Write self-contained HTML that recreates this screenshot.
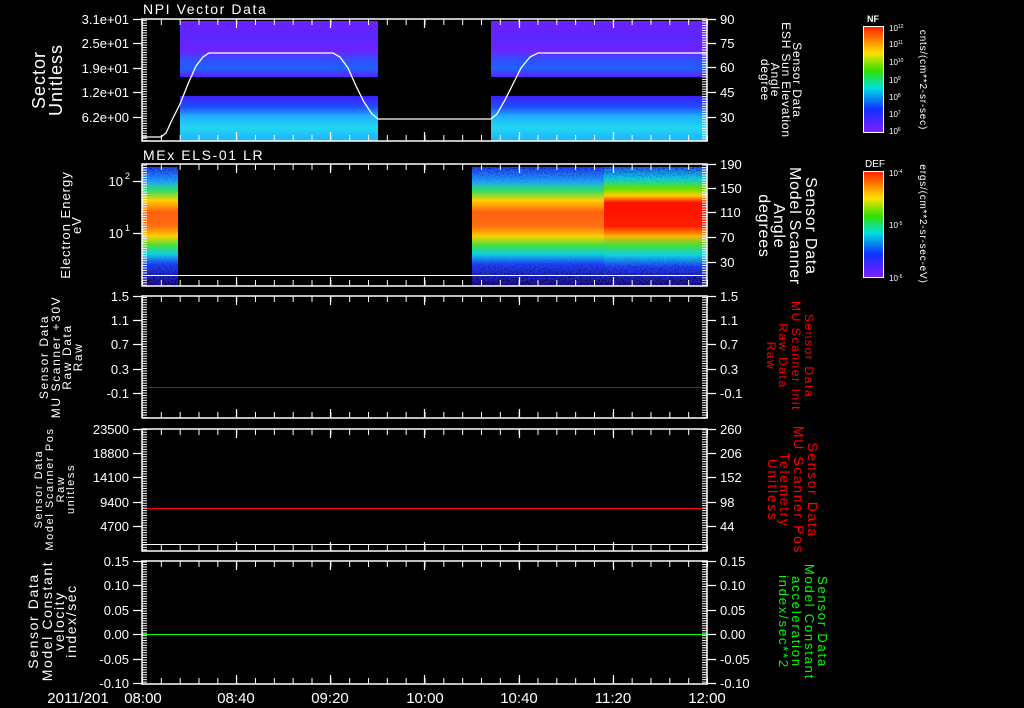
<!DOCTYPE html>
<html><head><meta charset="utf-8"><style>
html,body{margin:0;padding:0;background:#000;width:1024px;height:708px;overflow:hidden}
svg{display:block;font-family:"Liberation Sans",sans-serif}
</style></head><body>
<svg width="1024" height="708" viewBox="0 0 1024 708" xmlns="http://www.w3.org/2000/svg">
<defs>
<pattern id="tx" patternUnits="userSpaceOnUse" x="142" y="0" width="18.833" height="708"><rect x="0" y="0" width="1" height="708" fill="#fff"/></pattern>
<pattern id="ty" patternUnits="userSpaceOnUse" x="0" y="0.5" width="1024" height="2.45"><rect x="0" y="0" width="1024" height="1" fill="#fff"/></pattern>
<linearGradient id="cb" x1="0" y1="0" x2="0" y2="1">
<stop offset="0" stop-color="#ff2000"/><stop offset="0.25" stop-color="#ffe000"/><stop offset="0.42" stop-color="#30e000"/><stop offset="0.58" stop-color="#00e0e0"/><stop offset="0.78" stop-color="#1030ff"/><stop offset="1" stop-color="#8020ff"/></linearGradient>
<linearGradient id="p1lo" x1="0" y1="0" x2="0" y2="1">
<stop offset="0" stop-color="#3a20ff"/><stop offset="0.25" stop-color="#2050ff"/><stop offset="0.45" stop-color="#20b0ff"/><stop offset="0.7" stop-color="#20d8f0"/><stop offset="1" stop-color="#20b0ff"/></linearGradient>
<linearGradient id="p1hi" x1="0" y1="0" x2="0" y2="1">
<stop offset="0" stop-color="#6a20ff"/><stop offset="0.3" stop-color="#5a28ff"/><stop offset="0.5" stop-color="#7020ff"/><stop offset="0.7" stop-color="#3050ff"/><stop offset="0.85" stop-color="#2060ff"/><stop offset="1" stop-color="#5a20ff"/></linearGradient>
<linearGradient id="p2" x1="0" y1="0" x2="0" y2="1">
<stop offset="0" stop-color="#2040ff"/><stop offset="0.12" stop-color="#20a0ff"/><stop offset="0.2" stop-color="#30e060"/><stop offset="0.28" stop-color="#ffd000"/><stop offset="0.38" stop-color="#ff6010"/><stop offset="0.5" stop-color="#ff7010"/><stop offset="0.58" stop-color="#ffd000"/><stop offset="0.66" stop-color="#40e040"/><stop offset="0.73" stop-color="#10d0e0"/><stop offset="0.82" stop-color="#2040ff"/><stop offset="1" stop-color="#2010a0"/></linearGradient>
<linearGradient id="p2r" x1="0" y1="0" x2="0" y2="1">
<stop offset="0" stop-color="#2060ff"/><stop offset="0.1" stop-color="#10d0e0"/><stop offset="0.18" stop-color="#60e000"/><stop offset="0.24" stop-color="#ffd000"/><stop offset="0.3" stop-color="#ff1000"/><stop offset="0.5" stop-color="#ff2000"/><stop offset="0.58" stop-color="#ffb000"/><stop offset="0.66" stop-color="#40e040"/><stop offset="0.74" stop-color="#10d0e0"/><stop offset="0.84" stop-color="#2040ff"/><stop offset="1" stop-color="#2010a0"/></linearGradient>
<filter id="spk" x="0" y="0" width="1" height="1"><feTurbulence type="fractalNoise" baseFrequency="0.6" numOctaves="1" seed="3"/><feColorMatrix type="matrix" values="0 0 0 0 0  0 0 0 0 0  0 0 0 0 0  0 0 0 -3 1.7"/></filter>
<linearGradient id="fade" x1="0" y1="0" x2="0" y2="1"><stop offset="0" stop-color="#fff" stop-opacity="0.5"/><stop offset="0.15" stop-color="#fff" stop-opacity="0"/><stop offset="0.75" stop-color="#fff" stop-opacity="0"/><stop offset="1" stop-color="#fff" stop-opacity="1"/></linearGradient>
<mask id="m2"><rect x="0" y="167" width="1024" height="120" fill="url(#fade)"/></mask>
</defs>

<rect x="180" y="21" width="198" height="56" fill="url(#p1hi)"/>
<rect x="180" y="96" width="198" height="45" fill="url(#p1lo)"/>
<rect x="491" y="21" width="216" height="56" fill="url(#p1hi)"/>
<rect x="491" y="96" width="216" height="45" fill="url(#p1lo)"/>
<polyline fill="none" stroke="#fff" stroke-width="1.3" points="142,137 161,137 166,133 172,120 180,104 188,84 196,66 203,57 209,53 333,53 340,57 348,68 356,86 364,102 372,114 378,119 491,119 497,114 505,100 513,84 521,68 530,57 538,53 707,53"/>

<rect x="142" y="167" width="36" height="119" fill="url(#p2)"/>
<rect x="472" y="167" width="132" height="119" fill="url(#p2)"/>
<rect x="604" y="167" width="103" height="119" fill="url(#p2r)"/>
<g mask="url(#m2)"><rect x="142" y="167" width="36" height="119" filter="url(#spk)"/><rect x="472" y="167" width="235" height="119" filter="url(#spk)"/></g>
<line x1="142" y1="275.5" x2="707" y2="275.5" stroke="#fff"/>

<line x1="142" y1="387.5" x2="707" y2="387.5" stroke="#c00000"/>
<line x1="142" y1="508.5" x2="707" y2="508.5" stroke="#ff0000"/>
<line x1="142" y1="544.5" x2="707" y2="544.5" stroke="#fff"/>
<line x1="142" y1="634.5" x2="707" y2="634.5" stroke="#00ff00"/>

<g fill="none" stroke="#fff" stroke-width="1.5">
<rect x="142" y="19" width="565" height="122"/>
<rect x="142" y="164" width="565" height="122"/>
<rect x="142" y="296" width="565" height="122"/>
<rect x="142" y="429" width="565" height="122"/>
<rect x="142" y="561" width="565" height="123"/>
</g>
<g fill="url(#tx)">
<rect x="142" y="19" width="566" height="6"/><rect x="142" y="135" width="566" height="6"/>
<rect x="142" y="164" width="566" height="6"/><rect x="142" y="280" width="566" height="6"/>
<rect x="142" y="296" width="566" height="6"/><rect x="142" y="412" width="566" height="6"/>
<rect x="142" y="429" width="566" height="6"/><rect x="142" y="545" width="566" height="6"/>
<rect x="142" y="561" width="566" height="6"/><rect x="142" y="678" width="566" height="6"/>
</g>
<g fill="url(#ty)">
<rect x="142" y="19" width="5" height="122"/><rect x="702" y="19" width="5" height="122"/>
<rect x="142" y="164" width="5" height="122"/><rect x="702" y="164" width="5" height="122"/>
<rect x="142" y="296" width="5" height="122"/><rect x="702" y="296" width="5" height="122"/>
<rect x="142" y="429" width="5" height="122"/><rect x="702" y="429" width="5" height="122"/>
<rect x="142" y="561" width="5" height="123"/><rect x="702" y="561" width="5" height="123"/>
</g>
<g stroke="#fff" stroke-width="1.2">
<path d="M133 19.5H142M133 43.5H142M133 68.5H142M133 92.5H142M133 117.5H142M707 19.5H716M707 43.5H716M707 67.5H716M707 92.5H716M707 117.5H716"/>
<path d="M133 181.5H142M133 233.5H142M707 164.5H716M707 188.5H716M707 212.5H716M707 237.5H716M707 262.5H716"/>
<path d="M133 296.5H142M133 320.5H142M133 344.5H142M133 369.5H142M133 393.5H142M707 296.5H716M707 320.5H716M707 344.5H716M707 369.5H716M707 393.5H716"/>
<path d="M133 429.5H142M133 453.5H142M133 477.5H142M133 502.5H142M133 526.5H142M707 429.5H716M707 453.5H716M707 477.5H716M707 502.5H716M707 526.5H716"/>
<path d="M133 561.5H142M133 585.5H142M133 610.5H142M133 634.5H142M133 659.5H142M133 683.5H142M707 561.5H716M707 585.5H716M707 610.5H716M707 634.5H716M707 659.5H716M707 683.5H716"/>
<path d="M236.5 19V28M330.5 19V28M424.5 19V28M519.5 19V28M613.5 19V28M236.5 164V173M330.5 164V173M424.5 164V173M519.5 164V173M613.5 164V173M236.5 296V305M330.5 296V305M424.5 296V305M519.5 296V305M613.5 296V305M236.5 429V438M330.5 429V438M424.5 429V438M519.5 429V438M613.5 429V438M236.5 561V570M330.5 561V570M424.5 561V570M519.5 561V570M613.5 561V570"/>
<path d="M236.5 132V141M330.5 132V141M424.5 132V141M519.5 132V141M613.5 132V141M236.5 277V286M330.5 277V286M424.5 277V286M519.5 277V286M613.5 277V286M236.5 409V418M330.5 409V418M424.5 409V418M519.5 409V418M613.5 409V418M236.5 542V551M330.5 542V551M424.5 542V551M519.5 542V551M613.5 542V551M236.5 675V684M330.5 675V684M424.5 675V684M519.5 675V684M613.5 675V684"/>
</g>

<g fill="#fff" font-size="14" letter-spacing="1.6">
<text x="143" y="14">NPI Vector Data</text>
<text x="143" y="160">MEx ELS-01 LR</text>
</g>

<g fill="#fff" font-size="13" text-anchor="end">
<text x="129" y="24">3.1e+01</text><text x="129" y="48">2.5e+01</text><text x="129" y="73">1.9e+01</text><text x="129" y="97">1.2e+01</text><text x="129" y="122">6.2e+00</text>
<text x="123" y="186">10</text><text x="130" y="179" font-size="9">2</text>
<text x="123" y="238">10</text><text x="130" y="231" font-size="9">1</text>
<text x="129" y="301">1.5</text><text x="129" y="325">1.1</text><text x="129" y="349">0.7</text><text x="129" y="374">0.3</text><text x="129" y="398">-0.1</text>
<text x="129" y="434">23500</text><text x="129" y="458">18800</text><text x="129" y="482">14100</text><text x="129" y="507">9400</text><text x="129" y="531">4700</text>
<text x="129" y="566">0.15</text><text x="129" y="590">0.10</text><text x="129" y="615">0.05</text><text x="129" y="639">0.00</text><text x="129" y="664">-0.05</text><text x="129" y="688">-0.10</text>
</g>
<g fill="#fff" font-size="13">
<text x="720" y="24">90</text><text x="720" y="48">75</text><text x="720" y="72">60</text><text x="720" y="97">45</text><text x="720" y="122">30</text>
<text x="720" y="169">190</text><text x="720" y="193">150</text><text x="720" y="217">110</text><text x="720" y="242">70</text><text x="720" y="267">30</text>
<text x="720" y="301">1.5</text><text x="720" y="325">1.1</text><text x="720" y="349">0.7</text><text x="720" y="374">0.3</text><text x="720" y="398">-0.1</text>
<text x="720" y="434">260</text><text x="720" y="458">206</text><text x="720" y="482">152</text><text x="720" y="507">98</text><text x="720" y="531">44</text>
<text x="720" y="566">0.15</text><text x="720" y="590">0.10</text><text x="720" y="615">0.05</text><text x="720" y="639">0.00</text><text x="720" y="664">-0.05</text><text x="720" y="688">-0.10</text>
</g>
<g fill="#fff" font-size="15" text-anchor="middle">
<text x="78" y="703">2011/201</text><text x="143" y="703">08:00</text><text x="236" y="703">08:40</text><text x="330" y="703">09:20</text><text x="425" y="703">10:00</text><text x="519" y="703">10:40</text><text x="613" y="703">11:20</text><text x="707" y="703">12:00</text>
</g>

<g fill="#fff" text-anchor="middle">
<text transform="translate(45,80) rotate(-90)" font-size="18" letter-spacing="1"><tspan x="0" y="0">Sector</tspan><tspan x="0" y="17">Unitless</tspan></text>
<text transform="translate(70,225) rotate(-90)" font-size="13" letter-spacing="1"><tspan x="0" y="0">Electron Energy</tspan><tspan x="0" y="11">eV</tspan></text>
<text transform="translate(48,357) rotate(-90)" font-size="12" letter-spacing="1.6"><tspan x="0" y="0">Sensor Data</tspan><tspan x="0" y="12">MU Scanner +30V</tspan><tspan x="0" y="23">Raw Data</tspan><tspan x="0" y="34">Raw</tspan></text>
<text transform="translate(42,489) rotate(-90)" font-size="11" letter-spacing="1.6"><tspan x="0" y="0">Sensor Data</tspan><tspan x="0" y="11">Model Scanner Pos</tspan><tspan x="0" y="22">Raw</tspan><tspan x="0" y="32">unitless</tspan></text>
<text transform="translate(38,621) rotate(-90)" font-size="14" letter-spacing="1.6"><tspan x="0" y="0">Sensor Data</tspan><tspan x="0" y="14">Model Constant</tspan><tspan x="0" y="26">velocity</tspan><tspan x="0" y="38">index/sec</tspan></text>
</g>
<g text-anchor="middle">
<text fill="#fff" transform="translate(793,80) rotate(90)" font-size="12" letter-spacing="0.8"><tspan x="0" y="0">Sensor Data</tspan><tspan x="0" y="11">ESH Sun Elevation</tspan><tspan x="0" y="22">Angle</tspan><tspan x="0" y="32">degree</tspan></text>
<text fill="#fff" transform="translate(806,226) rotate(90)" font-size="16" letter-spacing="0.8"><tspan x="0" y="0">Sensor Data</tspan><tspan x="0" y="16">Model Scanner</tspan><tspan x="0" y="32">Angle</tspan><tspan x="0" y="47">degrees</tspan></text>
<text fill="#ff0000" transform="translate(805,356) rotate(90)" font-size="12" letter-spacing="1.6"><tspan x="0" y="0">Sensor Data</tspan><tspan x="0" y="13">MU Scanner Init</tspan><tspan x="0" y="26">Raw Data</tspan><tspan x="0" y="38">Raw</tspan></text>
<text fill="#ff0000" transform="translate(808,490) rotate(90)" font-size="14" letter-spacing="1.6"><tspan x="0" y="0">Sensor Data</tspan><tspan x="0" y="14">MU Scanner Pos</tspan><tspan x="0" y="28">Telemetry</tspan><tspan x="0" y="40">Unitless</tspan></text>
<text fill="#00ff00" transform="translate(818,622) rotate(90)" font-size="13" letter-spacing="1.8"><tspan x="0" y="0">Sensor Data</tspan><tspan x="0" y="13">Model Constant</tspan><tspan x="0" y="26">acceleration</tspan><tspan x="0" y="39">index/sec**2</tspan></text>
</g>

<rect x="863.5" y="26.5" width="20" height="106" fill="url(#cb)" stroke="#fff"/>
<rect x="863.5" y="171.5" width="20" height="106" fill="url(#cb)" stroke="#fff"/>
<g fill="#fff" font-size="8">
<text x="867" y="22" font-size="9" font-weight="bold">NF</text>
<text x="865" y="167" font-size="10">DEF</text>
<text x="889" y="31">10<tspan dy="-3" font-size="5">12</tspan></text>
<text x="889" y="47">10<tspan dy="-3" font-size="5">11</tspan></text>
<text x="889" y="65">10<tspan dy="-3" font-size="5">10</tspan></text>
<text x="889" y="83">10<tspan dy="-3" font-size="5">9</tspan></text>
<text x="889" y="100">10<tspan dy="-3" font-size="5">8</tspan></text>
<text x="889" y="117">10<tspan dy="-3" font-size="5">7</tspan></text>
<text x="889" y="134">10<tspan dy="-3" font-size="5">6</tspan></text>
<text x="889" y="176">10<tspan dy="-3" font-size="5">-4</tspan></text>
<text x="889" y="228">10<tspan dy="-3" font-size="5">-5</tspan></text>
<text x="889" y="281">10<tspan dy="-3" font-size="5">-6</tspan></text>
</g>
<g fill="#fff" font-size="10" text-anchor="middle" letter-spacing="0.8">
<text transform="translate(920,80) rotate(90)">cnts/(cm**2-sr-sec)</text>
<text transform="translate(920,224) rotate(90)">ergs/(cm**2-sr-sec-eV)</text>
</g>
</svg>
</body></html>
